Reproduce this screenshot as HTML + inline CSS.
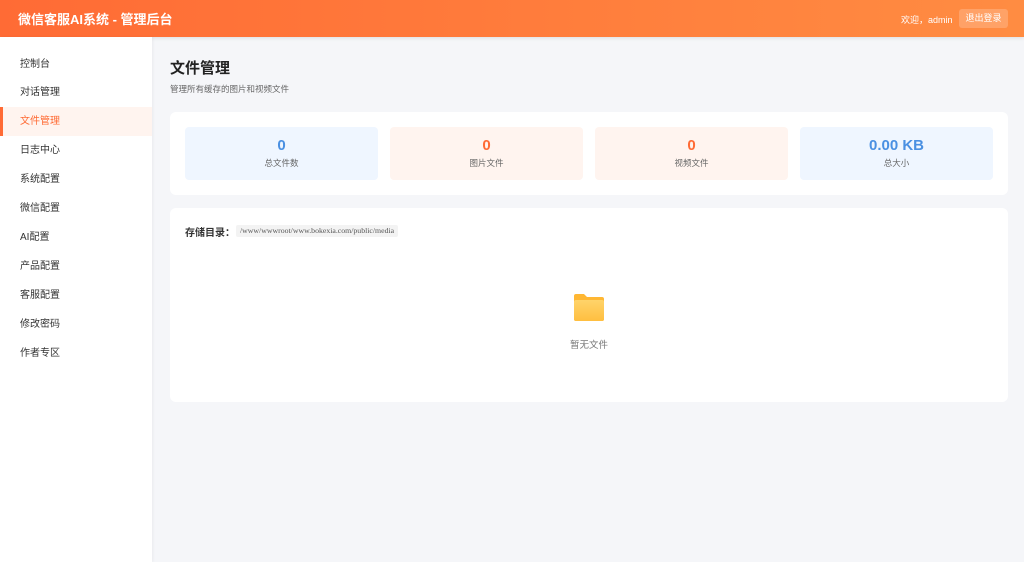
<!DOCTYPE html>
<html><head><meta charset="utf-8"><style>
*{margin:0;padding:0;box-sizing:border-box}
body{width:1024px;height:562px;overflow:hidden;background:#f5f6f9;font-family:"Liberation Sans","Noto Sans CJK SC",sans-serif;position:relative}
.hd{position:absolute;left:0;top:0;width:1024px;height:37px;background:linear-gradient(90deg,#ff6b35,#ff8c42);box-shadow:0 1px 4px rgba(0,0,0,.1);color:#fff}
.hd .t{position:absolute;left:18px;top:9px;font-size:13px;font-weight:bold}
.hd .w{position:absolute;left:901px;top:13px;font-size:9px}
.hd .b{position:absolute;left:959px;top:9px;width:49px;height:19px;background:rgba(255,255,255,.2);border-radius:3px;font-size:9px;text-align:center;line-height:19px}
.sb{position:absolute;left:0;top:37px;width:152px;height:525px;background:#fff;box-shadow:1px 0 3px rgba(0,0,0,.05)}
.sb div{height:29px;line-height:29px;padding-left:20px;font-size:10px;color:#333}
.sb .a{background:#fff4ef;color:#ff6b35;border-left:3px solid #ff6b35;padding-left:17px}
h1{position:absolute;left:170px;top:57px;font-size:15px;color:#222}
.sub{position:absolute;left:170px;top:83px;font-size:8.5px;color:#666}
.card{position:absolute;left:170px;background:#fff;border-radius:6px;width:838px}
.st{position:absolute;top:15px;width:193px;height:53px;border-radius:4px;text-align:center}
.st b{display:block;font-size:15px;font-weight:900;margin-top:10px}
.st span{display:block;font-size:8.5px;color:#666;margin-top:3px}
</style></head><body>
<div class="hd"><div class="t">微信客服AI系统 - 管理后台</div><div class="w">欢迎，admin</div><div class="b">退出登录</div></div>
<div class="sb" style="padding-top:12px"><div style="padding-top:1px">控制台</div><div>对话管理</div><div class="a">文件管理</div><div>日志中心</div><div>系统配置</div><div>微信配置</div><div>AI配置</div><div>产品配置</div><div>客服配置</div><div>修改密码</div><div>作者专区</div></div>
<h1>文件管理</h1><div class="sub">管理所有缓存的图片和视频文件</div>
<div class="card" style="top:112px;height:83px">
<div class="st" style="left:15px;background:#eff6ff"><b style="color:#4a90e2">0</b><span>总文件数</span></div>
<div class="st" style="left:220px;background:#fff4ef"><b style="color:#ff6b35">0</b><span>图片文件</span></div>
<div class="st" style="left:425px;background:#fff4ef"><b style="color:#ff6b35">0</b><span>视频文件</span></div>
<div class="st" style="left:630px;background:#eff6ff"><b style="color:#4a90e2">0.00 KB</b><span>总大小</span></div>
</div>
<div class="card" style="top:208px;height:194px">
<div style="position:absolute;left:15px;top:16px;font-size:10px;font-weight:bold;color:#333">存储目录：</div>
<div style="position:absolute;left:66px;top:17px;background:#f3f3f3;border-radius:2px;padding:1px 4px;font-family:'Liberation Serif',serif;font-size:7.8px;color:#555;line-height:10px">/www/wwwroot/www.bokexia.com/public/media</div>
<svg style="position:absolute;left:403px;top:85px" width="32" height="29" viewBox="0 0 32 29"><defs><linearGradient id="g" x1="0" y1="0" x2="0" y2="1"><stop offset="0" stop-color="#ffd46a"/><stop offset="1" stop-color="#ffbf40"/></linearGradient></defs><path d="M1 3a2 2 0 0 1 2-2h8l3 3h15a2 2 0 0 1 2 2v20a2 2 0 0 1-2 2H3a2 2 0 0 1-2-2z" fill="#ffb733"/><rect x="1" y="7" width="30" height="21" rx="2" fill="url(#g)"/></svg>
<div style="position:absolute;left:0;width:838px;top:129px;text-align:center;font-size:9.5px;color:#777">暂无文件</div>
</div>
</body></html>
